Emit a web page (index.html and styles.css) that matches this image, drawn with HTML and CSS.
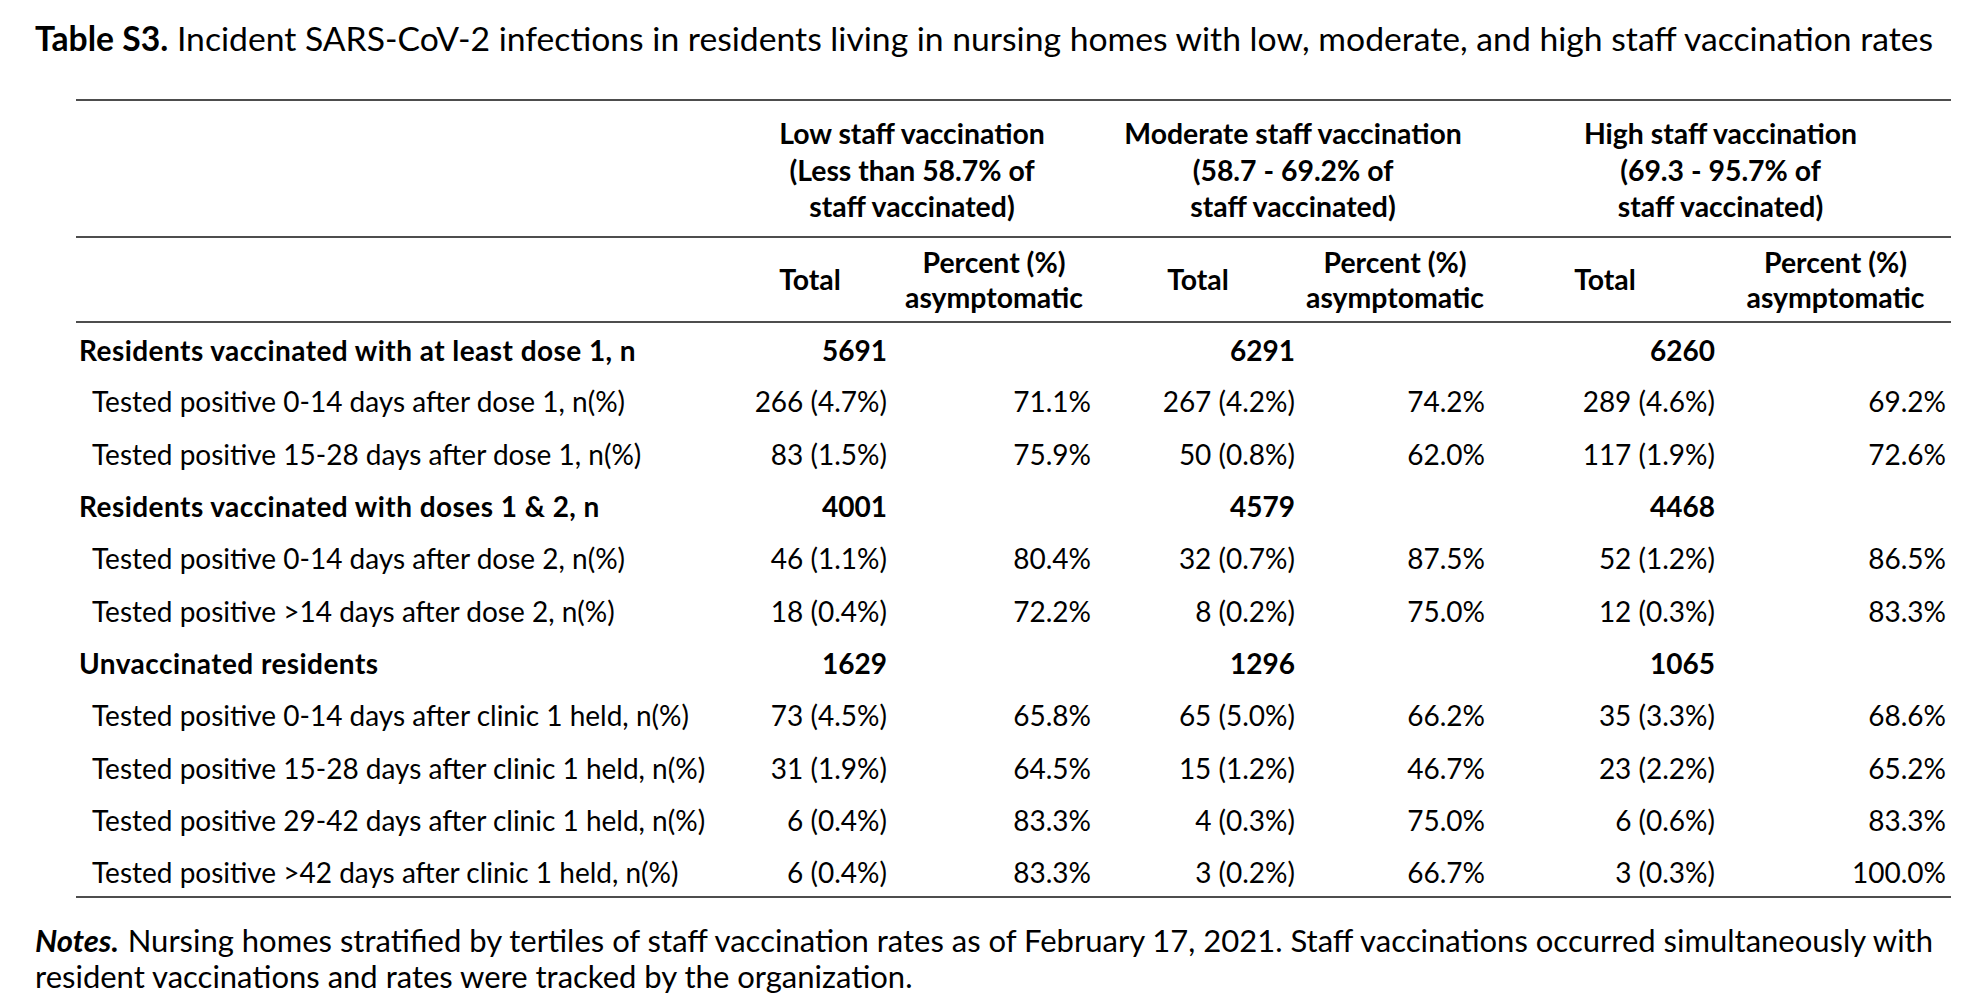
FILE: index.html
```html
<!DOCTYPE html>
<html lang="en">
<head>
<meta charset="utf-8">
<title>Table S3</title>
<link rel="stylesheet" href="styles.css">
</head>
<body>
<div class="page">
  <p class="caption"><b>Table S3.</b> Incident SARS-CoV-2 infections in residents living in nursing homes with low, moderate, and high staff vaccination rates</p>
  <table class="tbl">
    <colgroup>
      <col class="c-label">
      <col class="c1">
      <col class="c2">
      <col class="c3">
      <col class="c4">
      <col class="c5">
      <col class="c6">
    </colgroup>
    <thead>
      <tr class="grp">
        <th></th>
        <th colspan="2">Low staff vaccination<br>(Less than 58.7% of<br>staff vaccinated)</th>
        <th colspan="2">Moderate staff vaccination<br>(58.7 - 69.2% of<br>staff vaccinated)</th>
        <th colspan="2">High staff vaccination<br>(69.3 - 95.7% of<br>staff vaccinated)</th>
      </tr>
      <tr class="sub">
        <th></th>
        <th>Total</th>
        <th>Percent (%)<br>asymptomatic</th>
        <th>Total</th>
        <th>Percent (%)<br>asymptomatic</th>
        <th>Total</th>
        <th>Percent (%)<br>asymptomatic</th>
      </tr>
    </thead>
    <tbody>
      <tr class="sec">
        <td class="lbl">Residents vaccinated with at least dose 1, n</td>
        <td class="num">5691</td><td></td>
        <td class="num">6291</td><td></td>
        <td class="num">6260</td><td></td>
      </tr>
      <tr>
        <td class="lbl ind">Tested positive 0-14 days after dose 1, n(%)</td>
        <td class="num">266 (4.7%)</td><td class="num">71.1%</td>
        <td class="num">267 (4.2%)</td><td class="num">74.2%</td>
        <td class="num">289 (4.6%)</td><td class="num">69.2%</td>
      </tr>
      <tr>
        <td class="lbl ind">Tested positive 15-28 days after dose 1, n(%)</td>
        <td class="num">83 (1.5%)</td><td class="num">75.9%</td>
        <td class="num">50 (0.8%)</td><td class="num">62.0%</td>
        <td class="num">117 (1.9%)</td><td class="num">72.6%</td>
      </tr>
      <tr class="sec">
        <td class="lbl">Residents vaccinated with doses 1 &amp; 2, n</td>
        <td class="num">4001</td><td></td>
        <td class="num">4579</td><td></td>
        <td class="num">4468</td><td></td>
      </tr>
      <tr>
        <td class="lbl ind">Tested positive 0-14 days after dose 2, n(%)</td>
        <td class="num">46 (1.1%)</td><td class="num">80.4%</td>
        <td class="num">32 (0.7%)</td><td class="num">87.5%</td>
        <td class="num">52 (1.2%)</td><td class="num">86.5%</td>
      </tr>
      <tr>
        <td class="lbl ind">Tested positive &gt;14 days after dose 2, n(%)</td>
        <td class="num">18 (0.4%)</td><td class="num">72.2%</td>
        <td class="num">8 (0.2%)</td><td class="num">75.0%</td>
        <td class="num">12 (0.3%)</td><td class="num">83.3%</td>
      </tr>
      <tr class="sec">
        <td class="lbl">Unvaccinated residents</td>
        <td class="num">1629</td><td></td>
        <td class="num">1296</td><td></td>
        <td class="num">1065</td><td></td>
      </tr>
      <tr>
        <td class="lbl ind">Tested positive 0-14 days after clinic 1 held, n(%)</td>
        <td class="num">73 (4.5%)</td><td class="num">65.8%</td>
        <td class="num">65 (5.0%)</td><td class="num">66.2%</td>
        <td class="num">35 (3.3%)</td><td class="num">68.6%</td>
      </tr>
      <tr>
        <td class="lbl ind">Tested positive 15-28 days after clinic 1 held, n(%)</td>
        <td class="num">31 (1.9%)</td><td class="num">64.5%</td>
        <td class="num">15 (1.2%)</td><td class="num">46.7%</td>
        <td class="num">23 (2.2%)</td><td class="num">65.2%</td>
      </tr>
      <tr>
        <td class="lbl ind">Tested positive 29-42 days after clinic 1 held, n(%)</td>
        <td class="num">6 (0.4%)</td><td class="num">83.3%</td>
        <td class="num">4 (0.3%)</td><td class="num">75.0%</td>
        <td class="num">6 (0.6%)</td><td class="num">83.3%</td>
      </tr>
      <tr>
        <td class="lbl ind">Tested positive &gt;42 days after clinic 1 held, n(%)</td>
        <td class="num">6 (0.4%)</td><td class="num">83.3%</td>
        <td class="num">3 (0.2%)</td><td class="num">66.7%</td>
        <td class="num">3 (0.3%)</td><td class="num">100.0%</td>
      </tr>
    </tbody>
  </table>
  <p class="notes"><span class="notes-lead">Notes.</span> Nursing homes stratified by tertiles of staff vaccination rates as of February 17, 2021. Staff vaccinations occurred simultaneously with<br>resident vaccinations and rates were tracked by the organization.</p>
</div>
</body>
</html>
```

FILE: styles.css
```css
html, body {
  margin: 0;
  padding: 0;
  background: #ffffff;
}

body {
  font-family: Lato, "Open Sans", "Liberation Sans", sans-serif;
  color: #000000;
}

.page {
  width: 1986px;
  padding: 20px 0 0 35px;
  box-sizing: border-box;
}

.caption {
  margin: 0;
  font-size: 33.7px;
  line-height: 36px;
  white-space: nowrap;
}

.caption b {
  font-weight: 700;
}

.tbl {
  margin: 43px 0 0 41px;
  width: 1875px;
  border-collapse: collapse;
  table-layout: fixed;
  font-size: 28px;
  border-top: 2px solid #4d4d4d;
  border-bottom: 2px solid #4d4d4d;
}

.c-label { width: 652px; }
.c1 { width: 164px; }
.c2 { width: 204px; }
.c3 { width: 204px; }
.c4 { width: 190px; }
.c5 { width: 230px; }
.c6 { width: 231px; }

.tbl th {
  font-weight: 700;
  font-size: 28.4px;
  text-align: center;
  padding: 0;
  vertical-align: middle;
}

.grp th {
  line-height: 36.5px;
  padding: 14px 0 11px;
  border-bottom: 2px solid #4d4d4d;
}

.sub th {
  line-height: 35px;
  padding: 7px 0 6px;
  border-bottom: 2px solid #4d4d4d;
}

.tbl td {
  padding: 3px 5px 0 0;
  white-space: nowrap;
  vertical-align: middle;
}

.tbl tbody tr {
  height: 52.3px;
}

.lbl {
  text-align: left;
  padding-left: 3px !important;
}

.lbl.ind {
  padding-left: 16px !important;
}

.sec td {
  font-weight: 700;
}

.sec .lbl {
  letter-spacing: 0.45px;
}

.num {
  text-align: right;
}

.notes {
  margin: 24px 0 0;
  font-size: 31px;
  line-height: 36px;
  white-space: nowrap;
}

.notes-lead {
  font-weight: 700;
  font-style: italic;
  padding-right: 1px;
}
```
